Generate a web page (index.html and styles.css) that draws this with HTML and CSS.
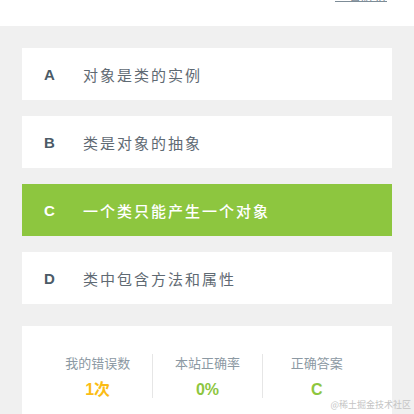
FILE: index.html
```html
<!DOCTYPE html>
<html lang="zh-CN">
<head>
<meta charset="utf-8">
<title>答题结果</title>
<link rel="stylesheet" href="styles.css">
</head>
<body>
<div class="topbar">
  <a class="toplink" href="#">查看解析</a>
</div>
<main class="content">
  <ul class="options">
    <li class="option"><span class="letter">A</span><span class="text">对象是类的实例</span></li>
    <li class="option"><span class="letter">B</span><span class="text">类是对象的抽象</span></li>
    <li class="option option-correct"><span class="letter">C</span><span class="text">一个类只能产生一个对象</span></li>
    <li class="option"><span class="letter">D</span><span class="text">类中包含方法和属性</span></li>
  </ul>
  <section class="stats">
    <div class="stat">
      <div class="stat-label">我的错误数</div>
      <div class="stat-value value-orange">1次</div>
    </div>
    <div class="stat">
      <div class="stat-label">本站正确率</div>
      <div class="stat-value value-green">0%</div>
    </div>
    <div class="stat">
      <div class="stat-label">正确答案</div>
      <div class="stat-value value-green">C</div>
    </div>
  </section>
</main>
<div class="watermark">@稀土掘金技术社区</div>
</body>
</html>
```
FILE: styles.css
```css
* { box-sizing: border-box; }
html, body {
  margin: 0;
  padding: 0;
  height: 100%;
  overflow: hidden;
}
body {
  background: #f0f0f0;
  font-family: "Liberation Sans", "Noto Sans CJK SC", sans-serif;
  position: relative;
}
.topbar {
  background: #fff;
  height: 26px;
  display: flex;
  justify-content: flex-end;
  align-items: flex-start;
  padding-right: 27px;
  overflow: hidden;
}
.toplink {
  font-family: "Noto Sans CJK SC", sans-serif;
  font-size: 13px;
  line-height: 16px;
  margin-top: -13px;
  color: #7d8c97;
  text-decoration: underline;
}
.content {
  padding: 22px 22px 0;
}
.options {
  list-style: none;
  margin: 0;
  padding: 0;
  display: flex;
  flex-direction: column;
  gap: 16px;
}
.option {
  background: #fff;
  height: 52px;
  display: flex;
  align-items: center;
  padding-left: 22px;
}
.letter {
  width: 39px;
  font-family: "Liberation Sans", sans-serif;
  font-weight: bold;
  font-size: 15px;
  color: #4b5b67;
}
.text {
  font-family: "Noto Sans CJK SC", sans-serif;
  font-size: 15px;
  letter-spacing: 2px;
  color: #5f6a73;
}
.option-correct {
  background: #8dc63f;
}
.option-correct .letter,
.option-correct .text {
  color: #fff;
}
.option-correct .text {
  font-weight: 500;
}
.stats {
  margin-top: 22px;
  background: #fff;
  height: 120px;
  padding: 28px 21px 0;
  display: grid;
  grid-template-columns: repeat(3, 1fr);
  align-items: start;
}
.stat {
  text-align: center;
  height: 44px;
}
.stat + .stat {
  border-left: 1px solid #e6e6e6;
}
.stat-label {
  font-family: "Noto Sans CJK SC", sans-serif;
  font-size: 13px;
  line-height: 18px;
  color: #8c99a3;
}
.stat-value {
  margin-top: 6px;
  font-family: "Liberation Sans", "Noto Sans CJK SC", sans-serif;
  font-weight: bold;
  font-size: 16px;
  line-height: 24px;
}
.value-orange { color: #fbbc14; }
.value-green { color: #8dc63f; }
.watermark {
  position: absolute;
  right: 3px;
  bottom: 3px;
  font-family: "Noto Sans CJK SC", sans-serif;
  font-size: 9px;
  line-height: 12px;
  color: #c4c4c4;
}
```
